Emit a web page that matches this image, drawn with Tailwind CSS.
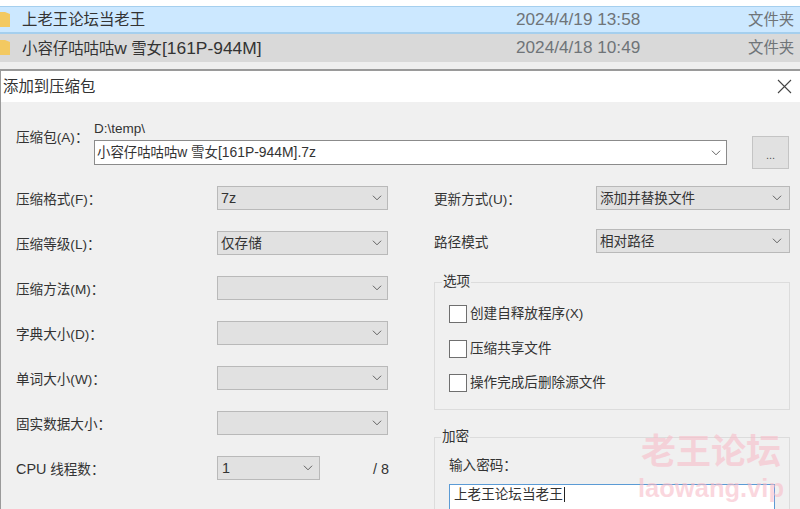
<!doctype html>
<html>
<head>
<meta charset="utf-8">
<script src="https://cdn.jsdelivr.net/npm/@tailwindcss/browser@4"></script>
</head>
<body class="bg-[#f3f3f3]">
<div class="relative w-[800px] h-[509px] overflow-hidden font-['Liberation_Sans','Noto_Sans_CJK_SC',sans-serif] text-[#333]">

  <!-- explorer rows behind the dialog -->
  <div class="h-[6px] bg-white"></div>
  <div class="h-[28px] flex items-center bg-[#cce8ff] border-t border-[#a5cfee] border-b-2 text-[15.4px]">
    <svg class="w-[11px] h-[16px] shrink-0" viewBox="0 0 11 16"><path d="M0 0h5l5 2v13H0z" fill="#f3c961"/></svg>
    <span class="ml-[11px] w-[494px]">上老王论坛当老王</span>
    <span class="w-[232px] text-[17.2px] text-[#6f7478]">2024/4/19 13:58</span>
    <span class="text-[#6f7478]">文件夹</span>
  </div>
  <div class="h-[28px] flex items-center bg-[#d9d9d9] text-[15.4px]">
    <svg class="w-[11px] h-[16px] shrink-0" viewBox="0 0 11 16"><path d="M0 0h5l5 2v13H0z" fill="#f3c961"/></svg>
    <span class="ml-[11px] w-[494px]">小容仔咕咕咕<span class="text-[17.4px]">w</span> 雪女<span class="text-[17.4px]">[161P-944M]</span></span>
    <span class="w-[232px] text-[17.2px] text-[#6f7478]">2024/4/18 10:49</span>
    <span class="text-[#6f7478]">文件夹</span>
  </div>
  <div class="h-[7px] bg-[#efefef]"></div>

  <!-- dialog -->
  <div class="border-t-2 border-l border-[#9a9a9a] h-[440px] bg-[#f0f0f0] text-[13.6px]">
    <div class="h-[31px] bg-white flex items-center justify-between pl-[2px] pr-[8px] text-[15.4px]">
      <span>添加到压缩包</span>
      <svg class="w-[15px] h-[15px]" viewBox="0 0 15 15" fill="none" stroke="#444" stroke-width="1.1"><path d="M1 1l13 13M14 1L1 14"/></svg>
    </div>

    <!-- archive path -->
    <div class="h-[84px] flex pl-[15px] pt-[18px]">
      <div class="w-[78px] pt-[8px]">压缩包(A)：</div>
      <div class="w-[633px]">
        <div class="h-[20px] text-[13.5px] leading-[18px]">D:\temp\</div>
        <div class="h-[25px] bg-white border border-[#8b8b8b] flex items-center justify-between pl-[2px] pr-[5px]">
          <span class="text-[13.4px]">小容仔咕咕咕<span class="text-[13.9px]">w</span> 雪女<span class="text-[13.9px]">[161P-944M].7z</span></span>
          <svg class="w-[10px] h-[6px]" viewBox="0 0 11 6" fill="none" stroke="#555"><path d="M1 .5l4.5 4.5L10 .5"/></svg>
        </div>
      </div>
      <div class="ml-[25px] mt-[16px] w-[37px] h-[33px] bg-[#e1e1e1] border border-[#c4c4c4] flex items-center justify-center pt-[6px] text-[11px] text-[#555]">...</div>
    </div>

    <div class="flex">
      <!-- left column -->
      <div class="w-[433px] pl-[15px] flex flex-col gap-[21px]">
        <div class="flex items-center h-[24px]"><span class="w-[201px] pt-[4px]">压缩格式(F)：</span>
          <div class="w-[171px] h-[24px] bg-[#e1e1e1] border border-[#b9b9b9] flex items-center justify-between pl-[3px] pr-[5px]"><span class="pt-[2px] text-[14.4px]">7z</span><svg class="w-[10px] h-[6px]" viewBox="0 0 11 6" fill="none" stroke="#555"><path d="M1 .5l4.5 4.5L10 .5"/></svg></div>
        </div>
        <div class="flex items-center h-[24px]"><span class="w-[201px] pt-[4px]">压缩等级(L)：</span>
          <div class="w-[171px] h-[24px] bg-[#e1e1e1] border border-[#b9b9b9] flex items-center justify-between pl-[3px] pr-[5px]"><span class="pt-[2px]">仅存储</span><svg class="w-[10px] h-[6px]" viewBox="0 0 11 6" fill="none" stroke="#555"><path d="M1 .5l4.5 4.5L10 .5"/></svg></div>
        </div>
        <div class="flex items-center h-[24px]"><span class="w-[201px] pt-[4px]">压缩方法(M)：</span>
          <div class="w-[171px] h-[24px] bg-[#e1e1e1] border border-[#b9b9b9] flex items-center justify-end pr-[5px]"><svg class="w-[10px] h-[6px]" viewBox="0 0 11 6" fill="none" stroke="#555"><path d="M1 .5l4.5 4.5L10 .5"/></svg></div>
        </div>
        <div class="flex items-center h-[24px]"><span class="w-[201px] pt-[4px]">字典大小(D)：</span>
          <div class="w-[171px] h-[24px] bg-[#e1e1e1] border border-[#b9b9b9] flex items-center justify-end pr-[5px]"><svg class="w-[10px] h-[6px]" viewBox="0 0 11 6" fill="none" stroke="#555"><path d="M1 .5l4.5 4.5L10 .5"/></svg></div>
        </div>
        <div class="flex items-center h-[24px]"><span class="w-[201px] pt-[4px]">单词大小(W)：</span>
          <div class="w-[171px] h-[24px] bg-[#e1e1e1] border border-[#b9b9b9] flex items-center justify-end pr-[5px]"><svg class="w-[10px] h-[6px]" viewBox="0 0 11 6" fill="none" stroke="#555"><path d="M1 .5l4.5 4.5L10 .5"/></svg></div>
        </div>
        <div class="flex items-center h-[24px]"><span class="w-[201px] pt-[4px]">固实数据大小：</span>
          <div class="w-[171px] h-[24px] bg-[#e1e1e1] border border-[#b9b9b9] flex items-center justify-end pr-[5px]"><svg class="w-[10px] h-[6px]" viewBox="0 0 11 6" fill="none" stroke="#555"><path d="M1 .5l4.5 4.5L10 .5"/></svg></div>
        </div>
        <div class="flex items-center h-[24px]"><span class="w-[201px] pt-[4px]"><span class="text-[14.4px]">CPU</span> 线程数：</span>
          <div class="w-[103px] h-[24px] bg-[#e1e1e1] border border-[#b9b9b9] flex items-center justify-between pl-[4px] pr-[6px]"><span class="pt-[2px] text-[14.4px]">1</span><svg class="w-[10px] h-[6px]" viewBox="0 0 11 6" fill="none" stroke="#555"><path d="M1 .5l4.5 4.5L10 .5"/></svg></div>
          <span class="ml-[53px] pt-[4px] text-[14.4px]">/ 8</span>
        </div>
      </div>

      <!-- right column -->
      <div class="w-[356px]">
        <div class="flex items-center h-[24px]"><span class="w-[162px] pt-[4px]">更新方式(U)：</span>
          <div class="w-[194px] h-[24px] bg-[#e1e1e1] border border-[#b9b9b9] flex items-center justify-between pl-[3px] pr-[7px]"><span class="pt-[2px]">添加并替换文件</span><svg class="w-[10px] h-[6px]" viewBox="0 0 11 6" fill="none" stroke="#555"><path d="M1 .5l4.5 4.5L10 .5"/></svg></div>
        </div>
        <div class="flex items-center h-[24px] mt-[19px]"><span class="w-[162px] pt-[4px]">路径模式</span>
          <div class="w-[194px] h-[24px] bg-[#e1e1e1] border border-[#b9b9b9] flex items-center justify-between pl-[3px] pr-[7px]"><span class="pt-[2px]">相对路径</span><svg class="w-[10px] h-[6px]" viewBox="0 0 11 6" fill="none" stroke="#555"><path d="M1 .5l4.5 4.5L10 .5"/></svg></div>
        </div>

        <fieldset class="mt-[19px] h-[138px] border border-[#dcdcdc] pl-[14px] pt-[13px]">
          <legend class="-ml-[7px] px-[1px]">选项</legend>
          <label class="flex items-center h-[18px] gap-[3px]"><span class="w-[18px] h-[18px] bg-white border border-[#6f6f6f]"></span>创建自释放程序(X)</label>
          <label class="flex items-center h-[18px] gap-[3px] mt-[17px]"><span class="w-[18px] h-[18px] bg-white border border-[#6f6f6f]"></span>压缩共享文件</label>
          <label class="flex items-center h-[18px] gap-[3px] mt-[16px]"><span class="w-[18px] h-[18px] bg-white border border-[#6f6f6f]"></span>操作完成后删除源文件</label>
        </fieldset>

        <fieldset class="mt-[17px] h-[100px] border border-[#dcdcdc] pl-[14px] pt-[9px]">
          <legend class="-ml-[8px] px-[1px]">加密</legend>
          <div class="h-[22px]">输入密码：</div>
          <div class="w-[326px] h-[40px] mt-[6px] bg-white border border-[#5b9bd5] pl-[4px] leading-[19px]">上老王论坛当老王<span class="border-l border-[#222] ml-[1px]"></span></div>
        </fieldset>
      </div>
    </div>
  </div>

  <!-- watermark -->
  <div class="absolute left-[638px] top-[431px] w-[146px] flex flex-col items-center text-[#f8bdc9]/60 font-bold pointer-events-none">
    <span class="text-[35px] leading-[42px] whitespace-nowrap">老王论坛</span>
    <span class="text-[25.5px] leading-[30px] whitespace-nowrap">laowang.vip</span>
  </div>
</div>
</body>
</html>
